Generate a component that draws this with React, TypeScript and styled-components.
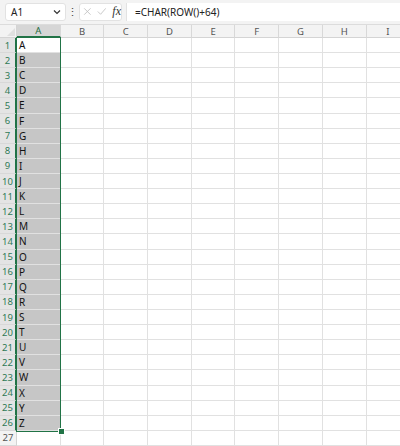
import { FC, Fragment } from "react";
import styled, { createGlobalStyle } from "styled-components";

const GlobalStyle = createGlobalStyle`
  html, body {
    margin: 0;
    padding: 0;
    background: #ffffff;
    font-family: "Noto Sans", "Noto Sans CJK JP", sans-serif;
    overflow: hidden;
  }
`;

const COL_W = 43.7;
const ROW_H = 15.12;
const COLS = ["A", "B", "C", "D", "E", "F", "G", "H", "I"];
const ROWS = 27;
const SEL_ROWS = 26;
const HEAD_H = 13;
const HEAD_W = 17;

const Page = styled.div`
  width: 400px;
  height: 446px;
  display: flex;
  flex-direction: column;
  overflow: hidden;
  background: #fff;
`;

const Toolbar = styled.div`
  height: 25px;
  background: #f3f3f3;
  display: flex;
  align-items: center;
  padding: 0 0 1px 5px;
  border-bottom: 1px solid #dcdcdc;
  box-sizing: border-box;
  flex: none;
`;

const Box = styled.div<{ $w: number }>`
  width: ${(p) => p.$w}px;
  height: 18px;
  box-sizing: border-box;
  background: #fff;
  border: 1px solid #e2e2e2;
  border-radius: 3px;
  display: flex;
  align-items: center;
  font-size: 10px;
  color: #222;
`;

const NameBox = styled(Box)`
  justify-content: space-between;
  padding: 0 4px 0 5px;
`;

const Dots = styled.div`
  width: 13px;
  display: flex;
  justify-content: center;
  color: #444;
  font-size: 11px;
`;

const FxBox = styled(Box)`
  padding: 0 0 0 3px;
  gap: 5px;
`;

const Formula = styled.div`
  flex: 1;
  height: 18px;
  margin-left: 4px;
  background: #fff;
  border-left: 1px solid #e2e2e2;
  display: flex;
  align-items: center;
  padding-left: 8px;
  font-size: 10px;
  color: #222;
`;

const Fx = styled.span`
  font-family: "Liberation Serif", serif;
  font-style: italic;
  font-size: 12px;
  color: #333;
  margin-left: 1px;
`;

const Grid = styled.div`
  position: relative;
  display: grid;
  grid-template-columns: ${HEAD_W}px repeat(${COLS.length}, ${COL_W}px);
  grid-template-rows: ${HEAD_H}px repeat(${ROWS}, ${ROW_H}px);
  flex: none;
`;

const Corner = styled.div`
  background: #f3f3f3;
  border-right: 1px solid #d4d4d4;
  border-bottom: 1px solid #d4d4d4;
  box-sizing: border-box;
  position: relative;
  &::after {
    content: "";
    position: absolute;
    right: 1px;
    bottom: 1px;
    border-left: 8px solid transparent;
    border-bottom: 8px solid #e0e0e0;
  }
`;

const ColHead = styled.div<{ $sel?: boolean }>`
  background: ${(p) => (p.$sel ? "#d6d6d6" : "#f3f3f3")};
  border-right: 1px solid #d8d8d8;
  border-bottom: ${(p) => (p.$sel ? "2px solid #217346" : "1px solid #d4d4d4")};
  box-sizing: border-box;
  display: flex;
  align-items: center;
  justify-content: center;
  font-size: 9.5px;
  color: ${(p) => (p.$sel ? "#1e6b40" : "#555")};
`;

const RowHead = styled.div<{ $sel?: boolean }>`
  background: ${(p) => (p.$sel ? "#e4e4e4" : "#f3f3f3")};
  border-bottom: 1px solid #d8d8d8;
  border-right: ${(p) => (p.$sel ? "2px solid #217346" : "1px solid #d4d4d4")};
  box-sizing: border-box;
  display: flex;
  align-items: center;
  justify-content: center;
  font-size: 9.5px;
  color: ${(p) => (p.$sel ? "#2f7a56" : "#555")};
`;

const Cell = styled.div<{ $fill?: string }>`
  background: ${(p) => p.$fill ?? "#fff"};
  border-right: 1px solid #e1e1e1;
  border-bottom: 1px solid #e1e1e1;
  box-sizing: border-box;
  display: flex;
  align-items: center;
  padding-left: 2px;
  font-size: 10px;
  color: #111;
`;

const Selection = styled.div`
  position: absolute;
  left: ${HEAD_W - 1}px;
  top: ${HEAD_H - 1}px;
  width: ${COL_W + 1.5}px;
  height: ${ROW_H * SEL_ROWS + 1.5}px;
  border: 1.5px solid #217346;
  box-sizing: border-box;
  pointer-events: none;
`;

const Handle = styled.div`
  position: absolute;
  left: ${HEAD_W + COL_W - 3}px;
  top: ${HEAD_H + ROW_H * SEL_ROWS - 3}px;
  width: 5px;
  height: 5px;
  background: #217346;
  border: 1px solid #fff;
  box-sizing: content-box;
`;

const Chevron: FC = () => (
  <svg width="8" height="6" viewBox="0 0 8 6">
    <path d="M1 1.5 L4 4.5 L7 1.5" fill="none" stroke="#333" strokeWidth="1.2" />
  </svg>
);

const Cross: FC = () => (
  <svg width="11" height="11" viewBox="0 0 11 11">
    <path d="M1.5 1.5 L9.5 9.5 M9.5 1.5 L1.5 9.5" stroke="#bdbdbd" strokeWidth="1" />
  </svg>
);

const Check: FC = () => (
  <svg width="12" height="11" viewBox="0 0 12 11">
    <path d="M1 5.5 L4.5 9 L11 1.5" fill="none" stroke="#bdbdbd" strokeWidth="1" />
  </svg>
);

const App: FC = () => {
  const rows = Array.from({ length: ROWS }, (_, i) => i + 1);
  return (
    <Page>
      <GlobalStyle />
      <Toolbar>
        <NameBox $w={61}>
          <span>A1</span>
          <Chevron />
        </NameBox>
        <Dots>⋮</Dots>
        <FxBox $w={43}>
          <Cross />
          <Check />
          <Fx>fx</Fx>
        </FxBox>
        <Formula>=CHAR(ROW()+64)</Formula>
      </Toolbar>
      <Grid>
        <Corner />
        {COLS.map((c) => (
          <ColHead key={c} $sel={c === "A"}>
            {c}
          </ColHead>
        ))}
        {rows.map((r) => (
          <Fragment key={r}>
            <RowHead $sel={r <= SEL_ROWS}>{r}</RowHead>
            {COLS.map((c) => {
              const inSel = c === "A" && r <= SEL_ROWS;
              const fill = inSel && r > 1 ? "#c6c6c6" : "#fff";
              return (
                <Cell key={c} $fill={fill}>
                  {inSel ? String.fromCharCode(64 + r) : ""}
                </Cell>
              );
            })}
          </Fragment>
        ))}
        <Selection />
        <Handle />
      </Grid>
    </Page>
  );
};

export default App;
